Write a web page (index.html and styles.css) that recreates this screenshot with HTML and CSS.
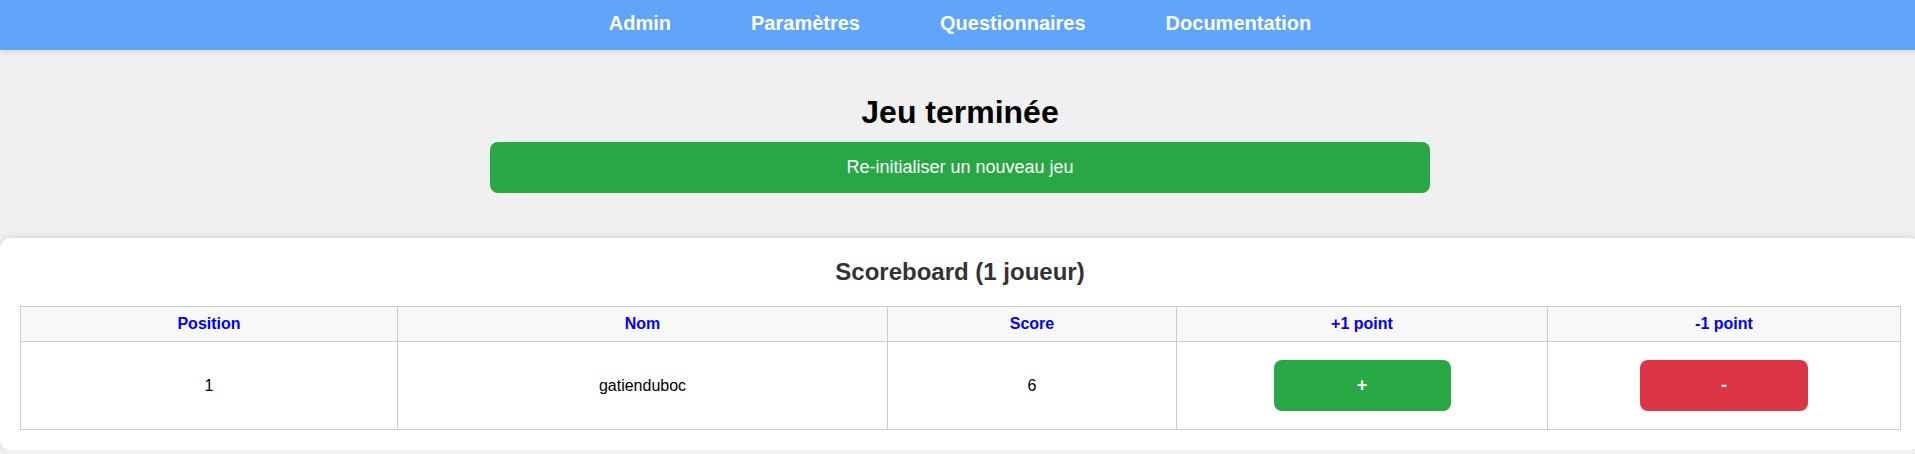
FILE: index.html
```html
<!DOCTYPE html>
<html lang="fr">
<head>
<meta charset="utf-8">
<title>Jeu terminée</title>
<link rel="stylesheet" href="styles.css">
</head>
<body>
<div class="page">
  <nav class="navbar">
    <a class="nav-link" href="#">Admin</a>
    <a class="nav-link" href="#">Paramètres</a>
    <a class="nav-link" href="#">Questionnaires</a>
    <a class="nav-link" href="#">Documentation</a>
  </nav>
  <main class="main">
    <section class="end-game">
      <h1 class="title">Jeu terminée</h1>
      <button class="btn btn-green btn-reset">Re-initialiser un nouveau jeu</button>
    </section>
    <section class="card">
      <h2 class="card-title">Scoreboard (1 joueur)</h2>
      <table class="score-table">
        <colgroup>
          <col class="col-pos">
          <col class="col-name">
          <col class="col-score">
          <col class="col-plus">
          <col class="col-minus">
        </colgroup>
        <thead>
          <tr>
            <th>Position</th>
            <th>Nom</th>
            <th>Score</th>
            <th>+1 point</th>
            <th>-1 point</th>
          </tr>
        </thead>
        <tbody>
          <tr>
            <td>1</td>
            <td>gatienduboc</td>
            <td>6</td>
            <td><button class="btn btn-green btn-point">+</button></td>
            <td><button class="btn btn-red btn-point">-</button></td>
          </tr>
        </tbody>
      </table>
    </section>
  </main>
</div>
</body>
</html>
```
FILE: styles.css
```css
html, body {
  margin: 0;
  padding: 0;
  overflow-x: hidden;
}

body {
  background: #f0f0f0;
  font-family: "Liberation Sans", Arial, sans-serif;
  color: #000;
}

.page {
  width: 1920px;
}

.navbar {
  height: 50px;
  box-sizing: border-box;
  padding-top: 12px;
  background: #60a5fa;
  display: flex;
  justify-content: center;
  align-items: flex-start;
  gap: 80px;
  box-shadow: 0 2px 6px rgba(0, 0, 0, 0.12);
  position: relative;
  z-index: 1;
}

.nav-link {
  color: #fff;
  font-size: 20px;
  font-weight: bold;
  text-decoration: none;
  line-height: normal;
}

.main {
  padding-top: 44px;
}

.end-game {
  display: flex;
  flex-direction: column;
  align-items: center;
}

.title {
  font-size: 32px;
  font-weight: bold;
  margin: 0 0 11px;
  line-height: normal;
}

.btn {
  border: none;
  color: #fff;
  font-family: "Liberation Sans", Arial, sans-serif;
  font-size: 18px;
  padding: 15px;
  border-radius: 8px;
  cursor: pointer;
  line-height: normal;
}

.btn-green {
  background: #28a745;
}

.btn-red {
  background: #dc3545;
}

.btn-reset {
  width: 940px;
}

.card {
  margin-top: 45px;
  background: #fff;
  border-radius: 10px;
  padding: 20px;
  box-shadow: 0 0 10px rgba(0, 0, 0, 0.12);
}

.card-title {
  margin: 0 0 20px;
  text-align: center;
  font-size: 24px;
  font-weight: bold;
  color: #333;
  line-height: normal;
}

.score-table {
  width: 100%;
  border-collapse: collapse;
  table-layout: fixed;
}

.col-pos { width: 377px; }
.col-name { width: 490px; }
.col-score { width: 289px; }
.col-plus { width: 371px; }
.col-minus { width: 353px; }

.score-table th,
.score-table td {
  border: 1px solid #ccc;
  padding: 8px;
  text-align: center;
  vertical-align: middle;
  font-size: 16px;
}

.score-table th {
  background: #f8f8f8;
  color: #0000ff;
  font-weight: bold;
}

.btn-point {
  display: block;
  width: 50%;
  margin: 10px auto;
  font-weight: bold;
}
```
